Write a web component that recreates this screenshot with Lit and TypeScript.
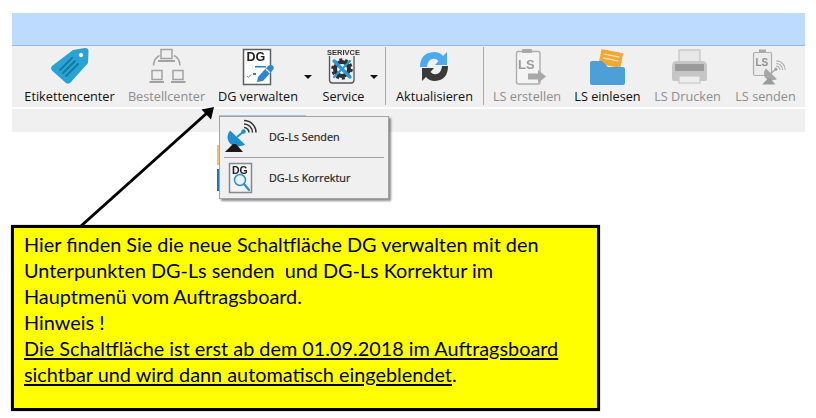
import { LitElement, html, css, svg } from "lit";
import { customElement } from "lit/decorators.js";

const dish = (c: string, base: string, wave: string) => svg`
  <path d="M5 4.500 C-2 14 7 25 20 18.500 Z" fill="${c}"/>
  <path d="M12 11 L18 6" stroke="${c}" stroke-width="2"/>
  <circle cx="18.500" cy="5.500" r="2.200" fill="${c}"/>
  <path d="M0 26 L8 18 L11 18 L18 26 Z" fill="${base}"/>
  <g fill="none" stroke="${wave}" stroke-width="1.500">
    <path d="M19 1.500 A5 5 0 0 1 24 6.500"/>
    <path d="M19 -2 A8.500 8.500 0 0 1 27.500 6.500"/>
    <path d="M19 -5.500 A12 12 0 0 1 31 6.500"/>
  </g>`;

const ICONS: Record<string, unknown> = {
  tag: svg`
    <path d="M73 52 L85 50 Q88.500 50 88.500 53 L88 65 L71 84 Q68.500 87 66 85 L52.500 73 Q50 70.500 52 68 Z" fill="#27a3d6"/>
    <circle cx="81" cy="57" r="2.500" fill="#fff" stroke="#1c7fa8" stroke-width=".6"/>
    <g stroke="#17779f" stroke-width="1.800" stroke-linecap="round">
      <path d="M72 60 L60 72"/><path d="M75 63 L63 75"/><path d="M78 66 L66 78"/>
    </g>`,
  net: svg`
    <g fill="none" stroke="#a2a2a2" stroke-width="1.500">
      <rect x="161" y="51.500" width="11" height="9"/>
      <rect x="152" y="72.500" width="10" height="9"/>
      <rect x="173" y="72.500" width="10" height="9"/>
      <path d="M159.500 57.500 Q154 60 153.500 67.500"/>
      <path d="M174 57.500 Q179.500 60 180 67.500"/>
    </g>
    <g fill="#a2a2a2">
      <rect x="158" y="62" width="17" height="2"/>
      <rect x="149.500" y="83" width="14.500" height="2"/>
      <rect x="171" y="83" width="14.500" height="2"/>
    </g>`,
  dg: svg`
    <rect x="243.500" y="51.500" width="27" height="35" fill="#fff" stroke="#5a5f66" stroke-width="1.500"/>
    <text x="246.500" y="63" font-size="12.500" font-weight="700" font-family="Liberation Sans, sans-serif" fill="#222">DG</text>
    <rect x="255" y="68" width="11" height="1.500" fill="#2e7fc9"/>
    <path d="M247 78 l1.500 1.500 l2.500 -3" stroke="#6d8fb5" stroke-width="1" fill="none"/>
    <rect x="253" y="75" width="3" height="2" fill="#2e7fc9"/>
    <path d="M258 79 L268 68 Q271 66 273 68 Q275 70 272 73 L263 83 L257 84 Z" fill="#2e86d0"/>
    <path d="M266 71 L270 75" stroke="#fff" stroke-width="1.200"/>`,
  service: svg`
    <text x="343.500" y="56.500" text-anchor="middle" font-size="7.500" font-weight="700" font-family="Liberation Sans, sans-serif" fill="#333">SERIVCE</text>
    <path d="M329.500 58 V82 Q329.500 85 332.500 85 H351 Q354 85 354 82 V58" fill="none" stroke="#555" stroke-width="1.300"/>
    <circle cx="342" cy="71" r="7" fill="none" stroke="#2f2f2f" stroke-width="4"/>
    <circle cx="342" cy="71" r="9.500" fill="none" stroke="#2f2f2f" stroke-width="2.500" stroke-dasharray="3 2.970"/>
    <path d="M334 63 L350 79" stroke="#1f9be0" stroke-width="3.200" stroke-linecap="round"/>
    <path d="M350 63 L334 79" stroke="#1f9be0" stroke-width="2.200" stroke-linecap="round"/>`,
  refresh: svg`
    <path d="M420 69 Q420 55 434 54 Q440 54 443 58 L447 54 V67 H435 L438.500 63 Q436 60.500 433.500 60.800 Q427.500 61.500 427 69 Z" fill="#4aa9ef"/>
    <path d="M448 68 Q448 82 435 83 Q429 83 426 79 L422 83 V70 H434 L430.500 74 Q433 76.500 435.500 76.200 Q441.500 75.500 442 68 Z" fill="#3a3a3a"/>`,
  lsadd: svg`
    <rect x="516.500" y="53.500" width="23.500" height="32.500" rx="2" fill="#f4f4f4" stroke="#adadad" stroke-width="1.400"/>
    <rect x="522" y="51" width="10" height="4" rx="1" fill="#a9a9a9"/>
    <text x="518" y="70.500" font-size="13" font-weight="700" font-family="Liberation Sans, sans-serif" fill="#9b9b9b">LS</text>
    <path d="M528 75.500 H538 V72 L546 78.500 L538 85 V81.500 H528 Z" fill="#a8a8a8"/>`,
  folder: svg`
    <g transform="rotate(11 611 60)">
      <rect x="600" y="53" width="22" height="15" fill="#f5a733"/>
      <path d="M603 57.500 H619 M603 61.500 H619" stroke="#fde9c4" stroke-width="1.200"/>
    </g>
    <path d="M590 65 Q590 63 592 63 H602 L608 69 H623 Q625 69 625 71 V85 Q625 87 623 87 H592 Q590 87 590 85 Z" fill="#4d9fd8"/>`,
  printer: svg`
    <rect x="679" y="52" width="21" height="14" fill="#e7e7e7" stroke="#c8c8c8" stroke-width="1.400"/>
    <path d="M672 68 Q672 63 677 63 H702 Q707 63 707 68 V81 Q707 83 705 83 H674 Q672 83 672 81 Z" fill="#c6c6c6"/>
    <rect x="675" y="66" width="29" height="7" fill="#9a9a9a"/>
    <rect x="679" y="78" width="21" height="7" fill="#eee" stroke="#c8c8c8" stroke-width="1.200"/>`,
  lssend: svg`
    <rect x="753.500" y="54.500" width="18" height="23" rx="1.500" fill="#ececec" stroke="#adadad" stroke-width="1.200"/>
    <rect x="759" y="51.500" width="7" height="3.500" fill="#a9a9a9"/>
    <text x="755.500" y="68" font-size="10" font-weight="700" font-family="Liberation Sans, sans-serif" fill="#8f8f8f">LS</text>
    <g transform="translate(762 67) scale(.75)">${dish("#a6a6a6", "#9b9b9b", "#b0b0b0")}</g>`,
};

interface Item { label: string; icon: string; w: number; left: number; off?: boolean; caret?: number; sepAfter?: boolean; }
const ITEMS: Item[] = [
  { label: "Etikettencenter", icon: "tag", w: 103, left: 18 },
  { label: "Bestellcenter", icon: "net", w: 91, left: 121, off: true },
  { label: "DG verwalten", icon: "dg", w: 92, left: 212, caret: 13 },
  { label: "Service", icon: "service", w: 53, left: 317, caret: 15, sepAfter: true },
  { label: "Aktualisieren", icon: "refresh", w: 97, left: 386, sepAfter: true },
  { label: "LS erstellen", icon: "lsadd", w: 86, left: 484, off: true },
  { label: "LS einlesen", icon: "folder", w: 75, left: 570 },
  { label: "LS Drucken", icon: "printer", w: 85, left: 645, off: true },
  { label: "LS senden", icon: "lssend", w: 71, left: 730, off: true },
];

@customElement("app-root")
export class AppRoot extends LitElement {
  static styles = css`
    :host { display: block; position: relative; width: 816px; height: 418px; background: #fff; overflow: hidden; }
    .window { margin: 13px 0 0 12px; width: 793px; }
    .title { height: 32px; background: #bddbff; border-bottom: 1.500px solid #93bce8; }
    .toolbar { display: flex; height: 60.500px; padding-left: 6px; background: #f0f0f0; border-bottom: 2px solid #fff; box-sizing: content-box; }
    .tool { display: flex; flex-direction: column; align-items: center; flex: none; }
    .tool svg { display: block; flex: none; filter: blur(.35px); }
    .tool span { font: 12.700px/14px "Open Sans", sans-serif; color: #111; white-space: nowrap; margin-top: 1px; }
    .tool.off span { color: #8d8d8d; }
    .caret { flex: none; }
    .caret i { display: block; width: 0; height: 0; margin-top: 29px; border: 4px solid transparent; border-top-color: #111; border-bottom: 0; }
    .sep { flex: none; width: 1px; height: 58px; margin-top: 1px; background: #a9a9a9; }
    .band { height: 23px; background: #f0f0f0; }

    .note { box-sizing: border-box; margin: 93px 0 0 11px; width: 589px; height: 186px; border: 3px solid #000; background: #ffff00; padding: 3px 0 0 10px;
      font: 19.850px/26px Lato, sans-serif; color: #000; white-space: pre; box-shadow: 0 0 1px rgba(0,0,0,.6); }
    .note u { text-decoration-thickness: 1.500px; text-underline-offset: 2px; }

    .behind { position: absolute; left: 217px; width: 3px; }
    .behind.o { top: 145px; height: 20px; background: #eec468; }
    .behind.b { top: 169px; height: 22px; background: #1c73c4; }
    .tab { position: absolute; left: 219px; top: 115px; width: 87px; height: 2px; background: #9cc6ec; }
    .menu { position: absolute; left: 219px; top: 116px; width: 170px; height: 83px; box-sizing: border-box; background: #f0f0f0; border: 1px solid #a2a2a2;
      box-shadow: 2px 2px 2px rgba(0,0,0,.45); display: flex; flex-direction: column; padding: 0 3px; }
    .row { display: flex; align-items: center; height: 40px; }
    .row svg { display: block; flex: none; width: 36px; height: 36px; margin-right: 10px; filter: blur(.3px); }
    .row span { font: 10.800px/14px "Open Sans", sans-serif; color: #222; -webkit-text-stroke: .2px #222; white-space: nowrap; }
    .divider { height: 1px; background: #a0a0a0; margin: 0 1px; flex: none; }
    .arrow { position: absolute; left: 0; top: 0; width: 816px; height: 418px; pointer-events: none; }
  `;

  render() {
    return html`
      <div class="window">
        <div class="title"></div>
        <div class="toolbar">
          ${ITEMS.map((it) => html`
            <div class="tool ${it.off ? "off" : ""}" style="width:${it.w}px">
              <svg width="${it.w}" height="42" viewBox="${it.left} 48 ${it.w} 42">${ICONS[it.icon]}</svg>
              <span>${it.label}</span>
            </div>
            ${it.caret ? html`<div class="caret" style="width:${it.caret}px"><i></i></div>` : ""}
            ${it.sepAfter ? html`<div class="sep"></div>` : ""}
          `)}
        </div>
        <div class="band"></div>
      </div>

      <div class="note">Hier finden Sie die neue Schaltfläche DG verwalten mit den
Unterpunkten DG-Ls senden  und DG-Ls Korrektur im
Hauptmenü vom Auftragsboard.
Hinweis !
<u>Die Schaltfläche ist erst ab dem 01.09.2018 im Auftragsboard</u>
<u>sichtbar und wird dann automatisch eingeblendet</u>.</div>

      <div class="behind o"></div>
      <div class="behind b"></div>
      <div class="tab"></div>
      <div class="menu">
        <div class="row">
          <svg viewBox="222 119 36 36">
            <g transform="translate(224 126)">${dish("#1e90d0", "#1a1a1a", "#333")}</g>
          </svg>
          <span>DG-Ls Senden</span>
        </div>
        <div class="divider"></div>
        <div class="row">
          <svg viewBox="221 162 36 36">
            <rect x="227.500" y="165.500" width="22" height="29" fill="#f4f4f4" stroke="#85898e" stroke-width="1.500"/>
            <text x="230" y="175.500" font-size="10.500" font-weight="700" font-family="Liberation Sans, sans-serif" fill="#222">DG</text>
            <circle cx="238" cy="182" r="5.500" fill="#e8f2fa" stroke="#2f8fd0" stroke-width="1.500"/>
            <path d="M242 186 L247 192" stroke="#2f8fd0" stroke-width="2.200" stroke-linecap="round"/>
          </svg>
          <span>DG-Ls Korrektur</span>
        </div>
      </div>

      <svg class="arrow" viewBox="0 0 816 418">
        <path d="M81 226 L207 113" stroke="#000" stroke-width="3"/>
        <path d="M214 107 L201.500 109.500 L211 119.500 Z" fill="#000"/>
      </svg>
    `;
  }
}
